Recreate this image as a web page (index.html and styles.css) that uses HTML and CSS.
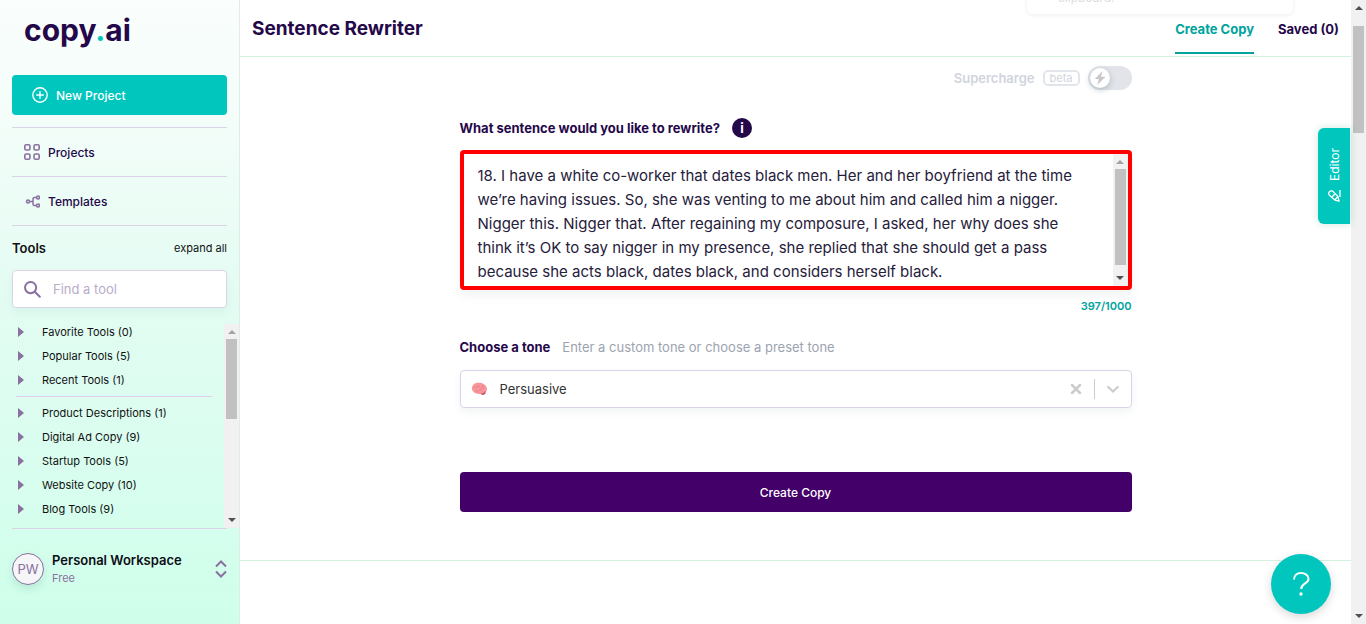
FILE: index.html
```html
<!DOCTYPE html>
<html lang="en">
<head>
<meta charset="utf-8">
<title>Sentence Rewriter - copy.ai</title>
<link rel="stylesheet" href="styles.css">
</head>
<body>
<aside class="sidebar">
  <a class="logo" href="#">copy<span class="logo-dot">.</span>ai</a>
  <button class="new-project" type="button">
    <svg width="16" height="16" viewBox="0 0 16 16" fill="none" stroke="currentColor" stroke-width="1.4" stroke-linecap="round"><circle cx="8" cy="8" r="7.2"/><path d="M8 4.7v6.6M4.7 8h6.6"/></svg>
    New Project
  </button>
  <nav class="nav">
    <a class="nav-item" href="#">
      <svg width="16" height="16" viewBox="0 0 16 16" fill="none" stroke="currentColor" stroke-width="1.6"><rect x=".8" y=".8" width="5.2" height="5.2" rx="1.5"/><rect x="10" y=".8" width="5.2" height="5.2" rx="1.5"/><rect x=".8" y="10" width="5.2" height="5.2" rx="1.5"/><rect x="10" y="10" width="5.2" height="5.2" rx="1.5"/></svg>
      Projects
    </a>
    <a class="nav-item" href="#">
      <svg width="16" height="16" viewBox="0 0 16 16" fill="none" stroke="currentColor" stroke-width="1.5"><circle cx="4" cy="8.5" r="1.5"/><circle cx="14" cy="4.5" r="1.5"/><circle cx="14" cy="12.5" r="1.5"/><path d="M5.5 8.5H9M12.500 4.500H10.500Q9 4.500 9 6v5q0 1.500 1.500 1.500h2"/></svg>
      Templates
    </a>
  </nav>
  <div class="tools-head">
    <h2>Tools</h2>
    <button class="expand" type="button">expand all</button>
  </div>
  <label class="search">
    <svg width="17" height="17" viewBox="0 0 17 17" fill="none" stroke="currentColor" stroke-width="2" stroke-linecap="round"><circle cx="6.600" cy="6.600" r="5.600"/><path d="M10.800 10.800l5 5"/></svg>
    <input type="search" placeholder="Find a tool" aria-label="Find a tool">
  </label>
  <div class="tools">
    <div class="tools-view">
      <ul class="tool-list">
        <li>Favorite Tools (0)</li>
        <li>Popular Tools (5)</li>
        <li>Recent Tools (1)</li>
      </ul>
      <ul class="tool-list">
        <li>Product Descriptions (1)</li>
        <li>Digital Ad Copy (9)</li>
        <li>Startup Tools (5)</li>
        <li>Website Copy (10)</li>
        <li>Blog Tools (9)</li>
        <li>Ecommerce (8)</li>
      </ul>
    </div>
    <div class="scrollbar tools-bar" aria-hidden="true"><i class="arrow up off"></i><i class="thumb"></i><i class="arrow down"></i></div>
  </div>
  <button class="workspace" type="button">
    <span class="avatar">PW</span>
    <span class="workspace-text"><strong>Personal Workspace</strong><span>Free</span></span>
    <svg width="12" height="18" viewBox="0 0 12 18" fill="none" stroke="currentColor" stroke-width="2"><path d="M1 6.500l5-5 5 5M1 11.500l5 5 5-5"/></svg>
  </button>
</aside>
<main class="main">
  <header class="header">
    <h1>Sentence Rewriter</h1>
    <nav class="tabs">
      <a class="tab active" href="#">Create Copy</a>
      <a class="tab" href="#">Saved (0)</a>
    </nav>
  </header>
  <section class="panel">
    <form class="form">
      <label class="supercharge">
        <span>Supercharge</span>
        <span class="beta">beta</span>
        <input class="switch-input" type="checkbox">
        <span class="switch"><span class="knob"><svg width="12" height="14" viewBox="0 0 12 14" fill="currentColor"><path d="M8.500 0L.8 8h4L3.300 14 11.500 5.700H7z"/></svg></span></span>
      </label>
      <div class="question">
        <label for="sentence">What sentence would you like to rewrite?</label>
        <button class="info" type="button" aria-label="More information">i</button>
      </div>
      <div class="textbox">
        <textarea id="sentence" rows="5">18. I have a white co-worker that dates black men. Her and her boyfriend at the time
we’re having issues. So, she was venting to me about him and called him a nigger.
Nigger this. Nigger that. After regaining my composure, I asked, her why does she
think it’s OK to say nigger in my presence, she replied that she should get a pass
because she acts black, dates black, and considers herself black.</textarea>
        <div class="scrollbar text-bar" aria-hidden="true"><i class="arrow up off"></i><i class="thumb"></i><i class="arrow down"></i></div>
      </div>
      <output class="count" for="sentence">397/1000</output>
      <div class="tone-head">
        <label for="tone">Choose a tone</label>
        <span>Enter a custom tone or choose a preset tone</span>
      </div>
      <div class="tone-box">
        <svg width="17" height="14" viewBox="0 0 17 14"><path d="M1 6C1 3 4 .7 7 .8c3.500-.5 8 1.700 8.800 5 .5 2-.3 3.700-1.300 4.700-.3 2.500-3 3-5 1.600C6 12.300.5 10.500 1 6z" fill="#f8979b"/><path d="M9.500 11.500q2.500.5 5-2.500c.5 3-1.500 4.700-4 3.500z" fill="#cf5268"/><path d="M3 6q1-2 3-1t2-2m0 5q2 1 2-1t3-1M4 9q2-2 3 1m4-7q0 2 2 1" fill="none" stroke="#e9747f" stroke-width=".7"/></svg>
        <input id="tone" type="text" value="Persuasive">
        <button class="icon-button" type="button" aria-label="Clear tone"><svg width="12" height="12" viewBox="0 0 12 12" stroke="currentColor" stroke-width="2.500" stroke-linecap="round"><path d="M2 2l8 8M10 2l-8 8"/></svg></button>
        <span class="divider"></span>
        <button class="icon-button" type="button" aria-label="Show tones"><svg width="12" height="12" viewBox="0 0 12 12" fill="none" stroke="currentColor" stroke-width="2.300" stroke-linecap="round"><path d="M1.300 4L6 8.500 10.700 4"/></svg></button>
      </div>
      <button class="create" type="submit">Create Copy</button>
    </form>
  </section>
  <div class="toast">clipboard!</div>
  <button class="editor" type="button">
    <svg width="14" height="14" viewBox="0 0 14 14" fill="none" stroke="currentColor" stroke-width="1.300"><path d="M2 12l.8-4L8 2.200Q9.500 1 11 2.200t1 3.300L6.500 11zM6 5l3.500 3.300M3.500 8l2.500 2.500M6 13h7"/></svg>
    Editor
  </button>
  <button class="help" type="button" aria-label="Help"><svg width="20" height="26" viewBox="0 0 20 26" fill="none" stroke="currentColor" stroke-width="2"><path d="M3 8.500C3 4.500 6 2 10 2s7.500 2.300 7.500 6c0 5-7.300 4-7.300 10"/><circle cx="10" cy="23" r="1.700" fill="currentColor" stroke="none"/></svg></button>
</main>
<div class="scrollbar page-bar" aria-hidden="true"><i class="arrow up"></i><i class="thumb"></i><i class="arrow down"></i></div>
</body>
</html>
```
FILE: styles.css
```css
* { box-sizing: border-box; }

body {
  margin: 0;
  display: flex;
  height: 100vh;
  overflow: hidden;
  background: #fff;
  color: #25084a;
  font-family: Inter, "Liberation Sans", sans-serif;
  font-size: 13px;
}

h1, h2, ul { margin: 0; padding: 0; }
button, input, textarea { font: inherit; color: inherit; border: 0; padding: 0; margin: 0; background: none; outline: 0; }
a { color: inherit; text-decoration: none; }
svg { flex: none; display: block; }

/* Sidebar */
.sidebar {
  flex: none;
  width: 240px;
  display: flex;
  flex-direction: column;
  padding: 8px 12px 22px;
  border-right: 1px solid #e0ecea;
  background: linear-gradient(#fafefc, #f4fdf9 18%, #e2fcf2 50%, #cfffeb);
}
.logo {
  height: 67px;
  padding-left: 12px;
  color: #25084a;
  font-size: 30px;
  line-height: 44px;
  font-weight: 700;
}
.logo-dot { color: #00c6be; }
.new-project {
  display: flex;
  align-items: center;
  gap: 8px;
  height: 40px;
  padding: 0 20px;
  border-radius: 4px;
  background: #00c6be;
  color: #fff;
  font-size: 12px;
  font-weight: 500;
}
.nav { margin-top: 12px; }
.nav-item {
  display: flex;
  align-items: center;
  gap: 8px;
  height: 49px;
  padding-left: 12px;
  border-top: 1px solid #dcd3e8;
  font-size: 12px;
  font-weight: 500;
}
.nav-item svg, .search svg { color: #8a70a0; }
.tools-head {
  display: flex;
  align-items: center;
  justify-content: space-between;
  height: 45px;
  border-top: 1px solid #dcd3e8;
  color: #111;
}
.tools-head h2 { font-size: 13px; font-weight: 600; }
.expand { font-size: 11px; }
.search {
  display: flex;
  align-items: center;
  gap: 12px;
  height: 38px;
  padding: 0 11px;
  border: 1px solid #dcd3e8;
  border-radius: 4px;
  background: #fff;
  box-shadow: 0 4px 8px #00806010;
}
.search input { width: 100%; min-width: 0; }
.search input::placeholder { color: #b9acc8; opacity: 1; }
.tools {
  flex: 1;
  min-height: 0;
  display: flex;
  margin: 16px -12px 0 4px;
}
.tools-view { flex: 1; overflow: hidden; padding-right: 12px; }
.tool-list { display: grid; gap: 8px; list-style: none; }
.tool-list + .tool-list { margin-top: 8px; padding-top: 8px; border-top: 1px solid #e0d0ee; }
.tool-list li {
  display: flex;
  align-items: center;
  gap: 18px;
  padding-left: 2px;
  color: #111;
  font-size: 11px;
  line-height: 16px;
}
.tool-list li::before {
  content: "";
  border: solid transparent;
  border-width: 5px 0 5px 6px;
  border-left-color: #8a70a0;
}
.workspace {
  display: flex;
  align-items: center;
  gap: 8px;
  height: 74px;
  padding-top: 6px;
  border-top: 1px solid #dcd3e8;
  color: #8a70a0;
  text-align: left;
}
.avatar {
  width: 32px;
  height: 32px;
  border: 1px solid #8a70a0;
  border-radius: 50%;
  background: #f6f6f8;
  line-height: 30px;
  text-align: center;
  box-shadow: 0 4px 8px #00604020;
}
.workspace-text { flex: 1; display: grid; font-size: 11px; line-height: 18px; }
.workspace-text strong { color: #0d0d16; font-size: 13px; font-weight: 600; }

/* Scrollbars */
.scrollbar {
  flex: none;
  width: 15px;
  display: flex;
  flex-direction: column;
  align-items: center;
  padding: 6px 2px;
  background: #f1f1f1;
}
.thumb { width: 11px; margin-top: 5px; background: #c1c1c1; }
.arrow { border: 4px solid transparent; border-top-width: 0; border-bottom: 4px solid #505050; }
.arrow.off { border-bottom-color: #a3a3a3; }
.arrow.down { margin-top: auto; transform: rotate(180deg); }
.tools-bar .thumb { height: 80px; }
.text-bar .thumb { height: 96px; }
.page-bar .thumb { height: 107px; margin-top: 16px; }

/* Main */
.main { position: relative; flex: 1; min-width: 0; }
.header {
  display: flex;
  justify-content: space-between;
  height: 57px;
  padding: 0 12px;
  border-bottom: 1px solid #d5f2df;
}
h1 { font-size: 19px; line-height: 58px; font-weight: 700; }
.tabs { display: flex; gap: 24px; font-size: 13px; font-weight: 700; line-height: 58px; }
.tab { height: 54px; }
.tab.active { color: #00a49c; border-bottom: 2px solid #00a49c; }
.panel { border-bottom: 1px solid #d5f2df; padding: 8px 24px 48px; }
.form { display: flex; flex-direction: column; max-width: 672px; margin: 0 auto; }

.supercharge {
  align-self: flex-end;
  display: flex;
  align-items: center;
  gap: 8px;
  height: 26px;
  color: #d1d4dd;
  font-size: 13px;
  font-weight: 600;
}
.beta {
  padding: 0 5px;
  border: 2px solid #e3e5ec;
  border-radius: 5px;
  font-size: 11px;
  line-height: 12px;
  font-weight: 400;
}
.switch-input { position: absolute; opacity: 0; }
.switch { width: 44px; height: 24px; padding: 2px; border-radius: 12px; background: #e3e4ea; }
.knob {
  display: grid;
  place-items: center;
  width: 20px;
  height: 20px;
  border-radius: 50%;
  background: #fff;
  color: #c8c8c8;
  box-shadow: 0 2px 6px #00404040;
}
.question {
  display: flex;
  align-items: center;
  gap: 12px;
  margin-top: 27px;
  font-size: 13px;
  font-weight: 700;
}
.info {
  width: 20px;
  height: 20px;
  border-radius: 50%;
  background: #25084a;
  color: #fff;
  font-size: 13px;
  line-height: 20px;
}
.textbox {
  display: flex;
  height: 140px;
  margin-top: 12px;
  border: 4px solid #f00;
  border-radius: 4px;
  box-shadow: 0 6px 10px #00604010;
}
.textbox textarea {
  flex: 1;
  min-width: 0;
  padding: 10px 0 0 14px;
  color: #26203a;
  font-size: 15px;
  line-height: 24px;
  white-space: pre;
  overflow: hidden;
  resize: none;
}
.count {
  align-self: flex-end;
  margin-top: 8px;
  color: #00a49c;
  font-size: 11px;
  line-height: 16px;
  font-weight: 600;
}
.tone-head { display: flex; gap: 12px; margin-top: 23px; font-size: 13px; line-height: 20px; color: #9ca3af; }
.tone-head label { color: #25084a; font-weight: 700; }
.tone-box {
  display: flex;
  align-items: center;
  height: 38px;
  margin-top: 13px;
  padding: 0 12px 0 10px;
  border: 1px solid #dcd3e8;
  border-radius: 4px;
  box-shadow: 0 4px 8px #00604010;
}
.tone-box input { flex: 1; min-width: 0; margin-left: 12px; color: #333; font-size: 13px; }
.icon-button { color: #ccc; }
.divider { width: 1px; height: 20px; margin: 0 12px; background: #ccc; }
.create {
  height: 40px;
  margin-top: 64px;
  border-radius: 4px;
  background: #430068;
  color: #fff;
  font-size: 12px;
  font-weight: 500;
}

/* Floating items */
.toast {
  position: absolute;
  top: -32px;
  right: 58px;
  width: 266px;
  height: 46px;
  padding: 20px 31px 0;
  border-radius: 6px;
  background: #fff;
  color: #ddd;
  font-size: 12px;
  line-height: 20px;
  box-shadow: 0 1px 5px #00000012;
}
.editor {
  position: absolute;
  top: 128px;
  right: 1px;
  display: flex;
  align-items: center;
  justify-content: center;
  gap: 8px;
  width: 32px;
  height: 96px;
  border-radius: 0 6px 6px 0;
  background: #00c6be;
  color: #fff;
  font-size: 12px;
  writing-mode: vertical-rl;
  transform: rotate(180deg);
  box-shadow: 0 0 8px #00806030;
}
.editor svg { transform: rotate(90deg); }
.help {
  position: absolute;
  right: 20px;
  bottom: 10px;
  display: grid;
  place-items: center;
  width: 60px;
  height: 60px;
  border-radius: 50%;
  background: #00c6be;
  color: #fff;
  box-shadow: 0 3px 10px #00000028;
}
```
